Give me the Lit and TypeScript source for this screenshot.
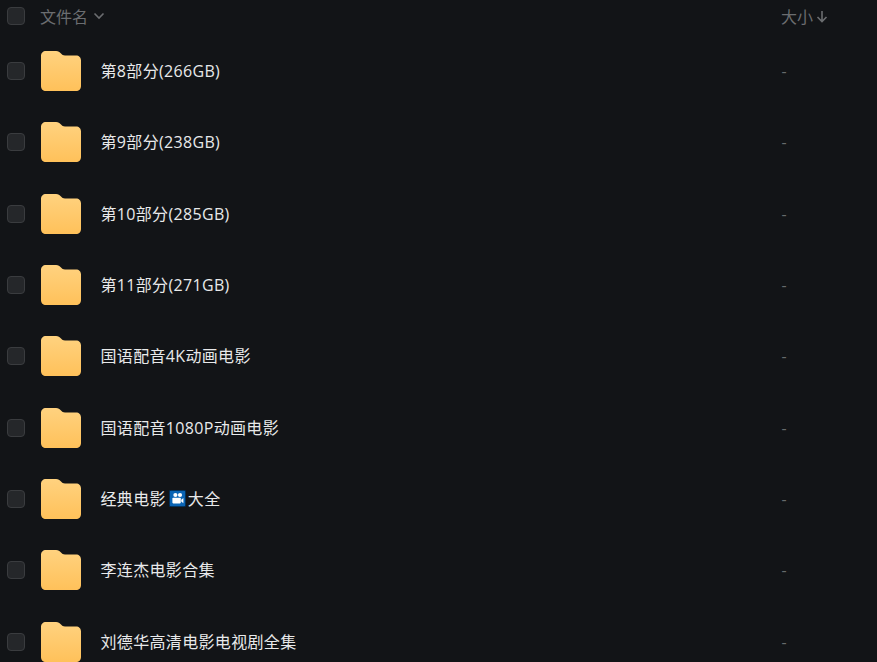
import { LitElement, html, css, svg } from "lit";
import { customElement } from "lit/decorators.js";

const names: unknown[] = [
  "第8部分(266GB)",
  "第9部分(238GB)",
  "第10部分(285GB)",
  "第11部分(271GB)",
  "国语配音4K动画电影",
  "国语配音1080P动画电影",
  "cinema",
  "李连杰电影合集",
  "刘德华高清电影电视剧全集",
];

const folder = svg`<svg class="folder" viewBox="0 0 40 40" width="40" height="40">
  <defs><linearGradient id="fg" x1="0" y1="0" x2="0" y2="1">
    <stop offset="0" stop-color="#ffd27f"/><stop offset="1" stop-color="#ffc15a"/>
  </linearGradient></defs>
  <path fill="url(#fg)" d="M5 0H15C17.5 0 18.5 1 20 2.6C21 3.7 22 4.6 24 4.6H35C38 4.6 40 6.6 40 9.6V35C40 38 38 40 35 40H5C2 40 0 38 0 35V5C0 2 2 0 5 0Z"/>
</svg>`;

const cinema = svg`<svg class="emoji" viewBox="0 0 17 17" width="17" height="17">
  <rect width="17" height="17" fill="#04233f"/>
  <rect x=".8" y=".8" width="15.4" height="15.4" rx="1" fill="#0a64b4"/>
  <circle cx="6.4" cy="5" r="2.1" fill="#fff"/>
  <circle cx="11" cy="5" r="2.1" fill="#fff"/>
  <rect x="3.4" y="7.8" width="8.4" height="5.6" rx=".8" fill="#fff"/>
  <path d="M12.2 9.8 14.4 8V13.2L12.2 11.4Z" fill="#fff"/>
</svg>`;

@customElement("app-root")
export class AppRoot extends LitElement {
  static styles = css`
    :host {
      display: block;
      width: 877px;
      height: 662px;
      overflow: hidden;
      background: #121417;
      font-family: "Segoe UI", "Open Sans", "Noto Sans CJK SC", sans-serif;
    }
    .head, .row {
      display: grid;
      grid-template-columns: 41px 60px 1fr 95px;
      align-items: center;
    }
    .head { height: 35.33px; font-size: 16px; color: #6b6d70; }
    .head .name-col { grid-column: 2 / 4; margin-left: -1px; display: flex; align-items: center; gap: 5px; margin-bottom: 3px; }
    .head .size-col { margin-left: -1px; display: flex; align-items: center; gap: 3px; margin-bottom: 3px; }
    .row { height: 71.33px; }
    .box {
      box-sizing: border-box;
      width: 18px;
      height: 18px;
      margin-left: 7px;
      border: 1px solid #3a3c3f;
      border-radius: 4px;
      background: #25272a;
    }
    .head .box { margin-bottom: 4px; }
    .folder { display: block; }
    .title { font-size: 16px; letter-spacing: 0.33px; margin-left: -0.5px; color: #e8e9ea; line-height: 22px; display: flex; align-items: center; white-space: nowrap; }
    .dash { font-size: 16px; margin-left: -0.5px; color: #666a6c; }
    .emoji { margin: 0 2px 0 3px; display: block; }
    svg.icon { display: block; fill: none; stroke: #6b6d70; stroke-width: 1.6; }
  `;

  render() {
    return html`
      <div class="head">
        <div class="box"></div>
        <div class="name-col">文件名
          <svg class="icon" width="12" height="12" viewBox="0 0 12 12"><path d="M1.5 3.5 6 8l4.5-4.5"/></svg>
        </div>
        <div class="size-col">大小
          <svg class="icon" width="12" height="14" viewBox="0 0 12 14"><path d="M6 2V12.5M1.5 8 6 12.5 10.5 8"/></svg>
        </div>
      </div>
      ${names.map(
        (n) => html`<div class="row">
          <div class="box"></div>
          ${folder}
          <div class="title">
            ${n === "cinema" ? html`经典电影${cinema}大全` : n}
          </div>
          <div class="dash">-</div>
        </div>`
      )}
    `;
  }
}
